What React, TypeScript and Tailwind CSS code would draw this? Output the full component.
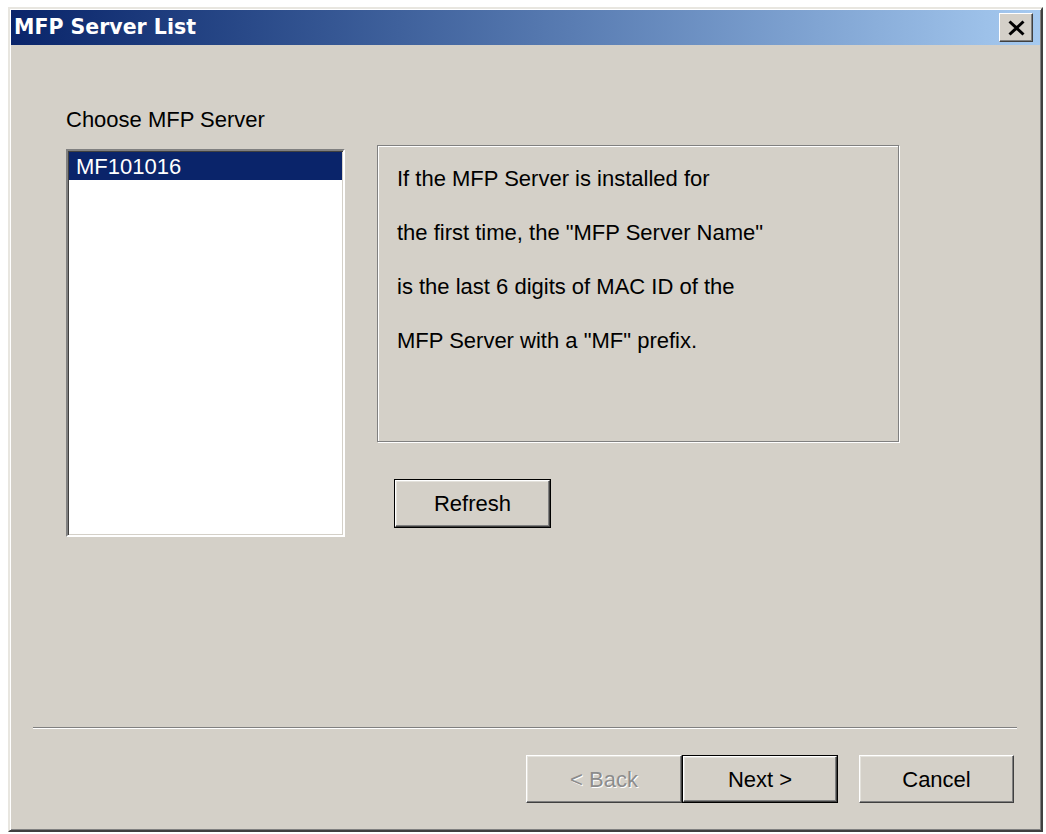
import clsx from "clsx";

const face = "font-['Liberation_Sans',Arial,sans-serif] text-[22px] text-black";

function WinButton({
  label,
  isDefault,
  disabled,
  className,
}: {
  label: string;
  isDefault?: boolean;
  disabled?: boolean;
  className?: string;
}) {
  return (
    <div className={clsx("flex bg-[#d4d0c8]", isDefault && "border border-black", className)}>
      <div
        className={clsx(
          "flex flex-1 items-center justify-center border border-t-white border-l-white border-r-[#404040] border-b-[#404040] shadow-[inset_-1px_-1px_0_#808080,inset_1px_1px_0_#e4e2dc]",
          disabled ? "text-[#8c8c8c] [text-shadow:1px_1px_0_#ffffff]" : "text-black",
        )}
      >
        {label}
      </div>
    </div>
  );
}

export default function App() {
  return (
    <div className="h-[834px] w-[1046px] overflow-hidden bg-white pl-[8px] pt-[7px]">
      {/* window frame */}
      <div className="flex h-[825px] w-[1035px] flex-col border-2 border-t-[#e8e6e0] border-l-[#e8e6e0] border-r-[#404040] border-b-[#404040] bg-[#d4d0c8] p-px shadow-[inset_1px_1px_0_#ffffff,inset_-1px_-1px_0_#808080]">
        {/* title bar */}
        <div className="flex h-[35px] shrink-0 items-center justify-between bg-gradient-to-r from-[#0a246a] to-[#a6caf0] pl-[3px] pr-[7px]">
          <span className="font-['DejaVu_Sans',Verdana,sans-serif] text-[20.5px] font-bold leading-none text-white">
            MFP Server List
          </span>
          <div className="flex h-[29px] w-[34px] items-center justify-center border border-t-white border-l-white border-r-[#404040] border-b-[#404040] bg-[#d4d0c8] shadow-[inset_-1px_-1px_0_#808080]">
            <svg width="19" height="16" viewBox="0 0 19 16">
              <path d="M2.5 1.5 L16.5 14.5 M16.5 1.5 L2.5 14.5" stroke="#000" strokeWidth="3" />
            </svg>
          </div>
        </div>

        {/* body */}
        <div className={clsx("flex flex-1 flex-col", face)}>
          <div className="pl-[55px] pt-[62px] leading-[26px]">Choose MFP Server</div>

          <div className="mt-[12px] flex pl-[55px]">
            {/* list box */}
            <div className="mt-[4px] h-[388px] w-[279px] border-2 border-t-[#808080] border-l-[#808080] border-r-white border-b-white bg-white shadow-[inset_1px_1px_0_#404040,inset_-1px_-1px_0_#d4d0c8]">
              <div className="mx-px mt-px h-[28px] bg-[#0a246a] pl-[7px] leading-[29px] text-white">MF101016</div>
            </div>

            <div className="ml-[32px] flex flex-col">
              {/* info panel */}
              <div className="h-[297px] w-[522px] border border-[#808080] pl-[19px] pt-[6px] leading-[54px] shadow-[inset_1px_1px_0_#ffffff,1px_1px_0_#ffffff]">
                <p>If the MFP Server is installed for</p>
                <p>the first time, the "MFP Server Name"</p>
                <p>is the last 6 digits of MAC ID of the</p>
                <p>MFP Server with a "MF" prefix.</p>
              </div>
              <WinButton label="Refresh" isDefault className="ml-[17px] mt-[37px] h-[49px] w-[157px]" />
            </div>
          </div>

          {/* separator */}
          <div className="ml-[22px] mt-[190px] h-[2px] w-[984px] border-t border-t-[#808080] border-b border-b-white" />

          <div className="mt-[26px] flex justify-end pr-[26px]">
            <WinButton label="< Back" disabled className="h-[48px] w-[156px]" />
            <WinButton label="Next >" isDefault className="h-[48px] w-[156px]" />
            <WinButton label="Cancel" className="ml-[21px] h-[48px] w-[155px]" />
          </div>
        </div>
      </div>
    </div>
  );
}
